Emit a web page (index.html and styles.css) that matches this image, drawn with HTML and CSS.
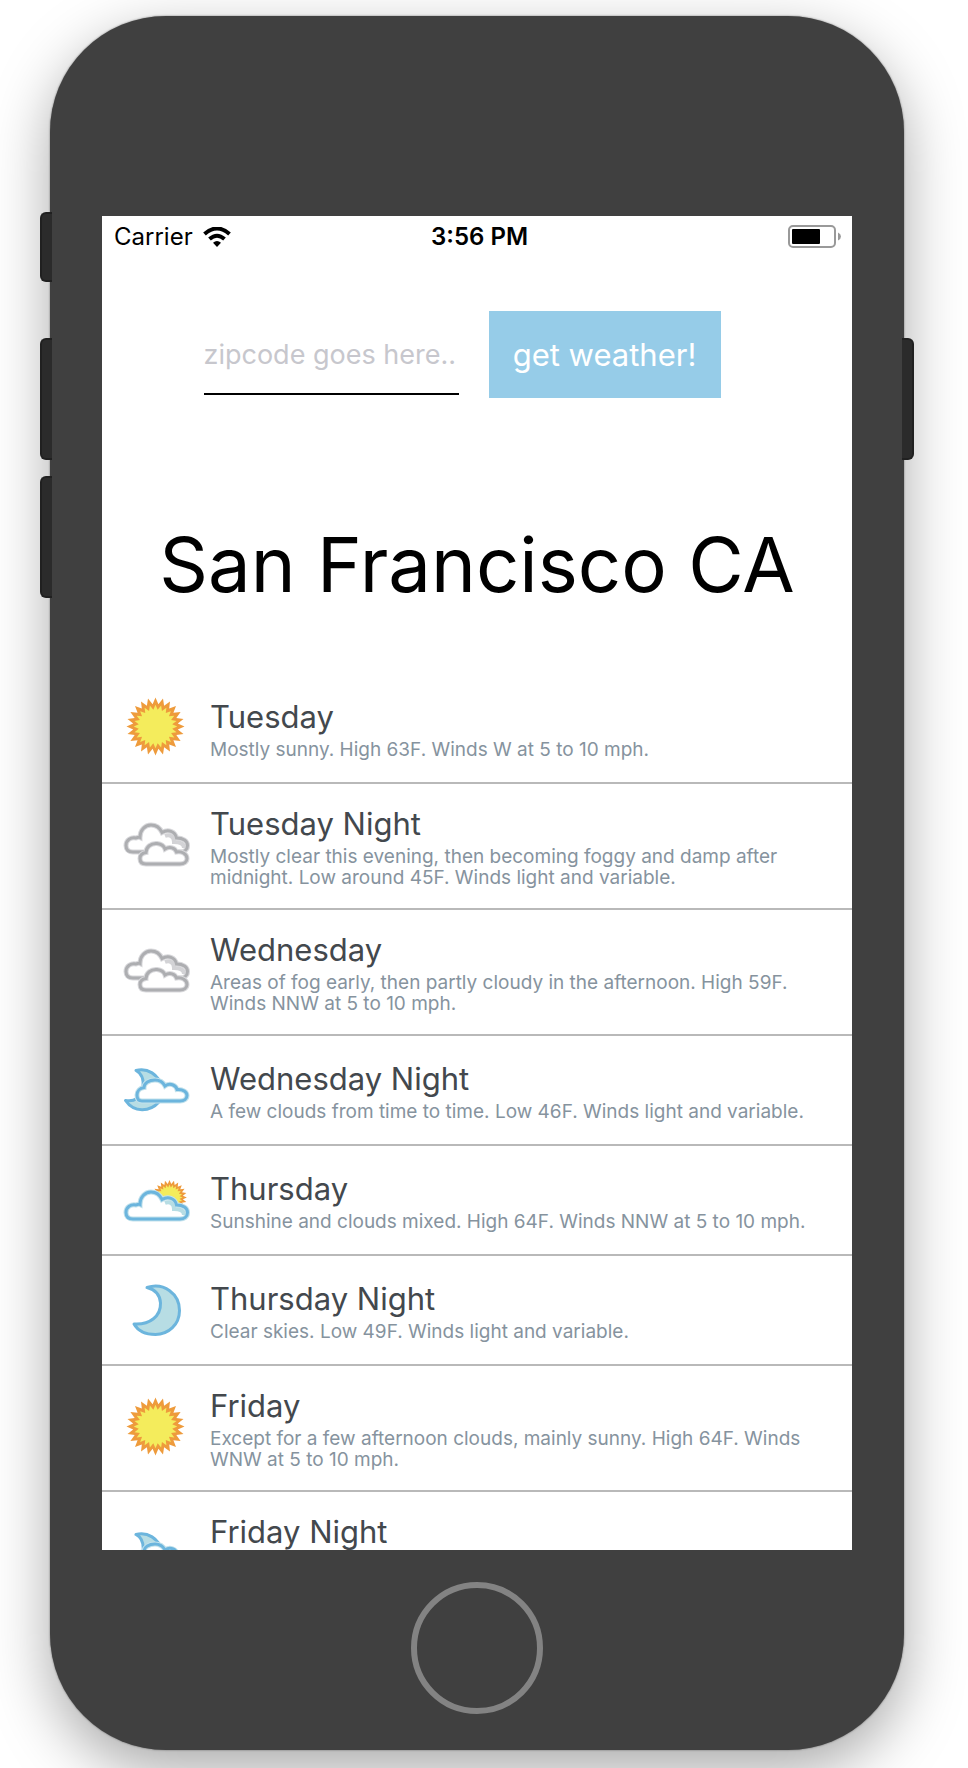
FILE: index.html
```html
<!DOCTYPE html>
<html lang="en">
<head>
<meta charset="utf-8">
<meta name="viewport" content="width=device-width, initial-scale=1">
<title>Weather</title>
<link rel="stylesheet" href="styles.css">
</head>
<body>
<svg class="sprite" aria-hidden="true">
  <defs>
    <path id="rays" d="M29 0L22.3 2.9 28 7.5 20.8 8.6 25.1 14.5 17.9 13.7 20.5 20.5 13.7 17.9 14.5 25.1 8.6 20.8 7.5 28 2.9 22.3 0 29 -2.9 22.3 -7.5 28 -8.6 20.8 -14.5 25.1 -13.7 17.9 -20.5 20.5 -17.9 13.7 -25.1 14.5 -20.8 8.6 -28 7.5 -22.3 2.9 -29 0 -22.3 -2.9 -28 -7.5 -20.8 -8.6 -25.1 -14.5 -17.9 -13.7 -20.5 -20.5 -13.7 -17.9 -14.5 -25.1 -8.6 -20.8 -7.5 -28 -2.9 -22.3 0 -29 2.9 -22.3 7.5 -28 8.6 -20.8 14.5 -25.1 13.7 -17.9 20.5 -20.5 17.9 -13.7 25.1 -14.5 20.8 -8.6 28 -7.5 22.3 -2.9Z"/>
    <g id="sun-disc">
      <use href="#rays" class="sun-rays"/>
      <use href="#rays" class="sun-core" transform="scale(.75)"/>
    </g>
    <path id="cloud-big" d="M11 40C6 40 4 37 4 33.500C4 28 9 25 14 26C15 25.500 17 25 18 25.500C18 18 23 13 29 13C35 13 38 16 40 20.500C46 17 53 19 54.500 26C61 26 65.500 29 65.500 33.500C65.500 38 62 40 58 40Z"/>
    <path id="cloud-low" d="M24 52C20 52 18 50 18 46.500C18 43 20.500 41 24 40.500C24 35 29 31 35 31.500C39 32 42 34 43 37C48 34 53 36 54.500 40C60 39 65 42 65 46.500C65 50 62 52 58 52Z"/>
    <path id="cloud-mid" d="M20 45C16.500 45 15 42.500 15 39C15 35 18 32 22 31.500C22 27 27 24 33 24C38 24 41 26 43 30C48 26.500 54 29 55 33.500C61 33 65 36 65 39.500C65 43 62 45 58 45Z"/>
  </defs>
  <symbol id="sunny" viewBox="0 0 68 68">
    <use href="#sun-disc" transform="translate(33.500 32.500)"/>
  </symbol>
  <symbol id="foggy" viewBox="0 0 68 68">
    <use href="#cloud-big" class="gray-soft"/>
    <path class="gray-shade" d="M43 24C48 22 52 25 52 30C59 30 62 32 62 36"/>
    <use href="#cloud-big" class="gray-line"/>
    <use href="#cloud-low" class="gray-soft"/>
    <use href="#cloud-low" class="gray-line"/>
  </symbol>
  <symbol id="cloudy-night" viewBox="0 0 68 68">
    <path class="moon" d="M14 14.500C25 11.500 37 18 40 32L37 46C28 56 12 57 3.500 44.500C12 46 20 42 21 32C22 23 19 17 14 14.500Z"/>
    <use href="#cloud-mid" class="blue-soft"/>
    <use href="#cloud-mid" class="blue-line"/>
  </symbol>
  <symbol id="partly-cloudy" viewBox="0 0 68 68">
    <use href="#sun-disc" transform="translate(47.500 31.500) scale(.6)"/>
    <g transform="translate(0 13)">
      <use href="#cloud-big" class="blue-soft"/>
      <path class="blue-shade" d="M43 24C48 22 52 25 52 30C59 30 62 32 62 36"/>
      <use href="#cloud-big" class="blue-line"/>
    </g>
  </symbol>
  <symbol id="clear-night" viewBox="0 0 68 68">
    <path class="moon" d="M25 11.500C42 6 57.500 18 57.500 34.500C57.500 49 46 58.500 33.500 58.500C24 58.500 16 55 12 48C28 49 39 40 38.500 27C38 19 33 13.500 25 11.500Z"/>
  </symbol>
</svg>

<div class="phone">
  <span class="side-key side-key--mute"></span>
  <span class="side-key side-key--up"></span>
  <span class="side-key side-key--down"></span>
  <span class="side-key side-key--power"></span>

  <main class="screen">
    <header class="status">
      <div class="status-carrier">
        <span>Carrier</span>
        <svg class="wifi" viewBox="0 0 28 20" aria-label="Wi-Fi">
          <path d="M1.500 7Q14-4 26.500 7M6.500 12Q14 5.500 21.500 12"/>
          <path class="wifi-dot" d="M10 15.800Q14 12.400 18 15.800L14 20Z"/>
        </svg>
      </div>
      <time class="status-time">3:56 PM</time>
      <svg class="battery" viewBox="0 0 53 23" aria-label="Battery">
        <rect class="battery-case" x="1" y="1" width="46" height="21" rx="4"/>
        <rect x="4" y="4" width="28" height="15" rx="1"/>
        <path class="battery-tip" d="M50 7.500Q53 9 53 11.500T50 15.500Z"/>
      </svg>
    </header>

    <form class="search">
      <input class="zip" type="text" placeholder="zipcode goes here.." aria-label="Zipcode">
      <button class="submit" type="button">get weather!</button>
    </form>

    <h1 class="city">San Francisco CA</h1>

    <ul class="forecast">
      <li class="day">
        <svg class="icon"><use href="#sunny"/></svg>
        <div class="info"><h2 class="name">Tuesday</h2><p class="text">Mostly sunny. High 63F. Winds W at 5 to 10 mph.</p></div>
      </li>
      <li class="day">
        <svg class="icon"><use href="#foggy"/></svg>
        <div class="info"><h2 class="name">Tuesday Night</h2><p class="text">Mostly clear this evening, then becoming foggy and damp after midnight. Low around 45F. Winds light and variable.</p></div>
      </li>
      <li class="day">
        <svg class="icon"><use href="#foggy"/></svg>
        <div class="info"><h2 class="name">Wednesday</h2><p class="text">Areas of fog early, then partly cloudy in the afternoon. High 59F. Winds NNW at 5 to 10 mph.</p></div>
      </li>
      <li class="day">
        <svg class="icon"><use href="#cloudy-night"/></svg>
        <div class="info"><h2 class="name">Wednesday Night</h2><p class="text">A few clouds from time to time. Low 46F. Winds light and variable.</p></div>
      </li>
      <li class="day">
        <svg class="icon"><use href="#partly-cloudy"/></svg>
        <div class="info"><h2 class="name">Thursday</h2><p class="text">Sunshine and clouds mixed. High 64F. Winds NNW at 5 to 10 mph.</p></div>
      </li>
      <li class="day">
        <svg class="icon"><use href="#clear-night"/></svg>
        <div class="info"><h2 class="name">Thursday Night</h2><p class="text">Clear skies. Low 49F. Winds light and variable.</p></div>
      </li>
      <li class="day">
        <svg class="icon"><use href="#sunny"/></svg>
        <div class="info"><h2 class="name">Friday</h2><p class="text">Except for a few afternoon clouds, mainly sunny. High 64F. Winds WNW at 5 to 10 mph.</p></div>
      </li>
      <li class="day">
        <svg class="icon"><use href="#cloudy-night"/></svg>
        <div class="info info--tall"><h2 class="name">Friday Night</h2></div>
      </li>
    </ul>
  </main>

  <button class="home" type="button" aria-label="Home"></button>
</div>
</body>
</html>
```

FILE: styles.css
```css
* {
  box-sizing: border-box;
}

body {
  margin: 0;
  overflow: hidden;
  background: #fff;
  color: #000;
  font-family: Inter, Roboto, sans-serif;
}

.sprite {
  position: absolute;
  width: 0;
  height: 0;
}

.phone {
  position: relative;
  display: grid;
  grid-template-rows: minmax(0, 1fr) 200px;
  height: calc(100vh - 34px);
  margin: 16px 64px 18px 50px;
  padding: 200px 52px 0;
  border-radius: 116px;
  background: #404040;
  box-shadow: 0 0 2px rgba(0, 0, 0, .5), 0 20px 60px rgba(0, 0, 0, .34);
}

.side-key {
  position: absolute;
  left: -10px;
  width: 12px;
  height: 122px;
  border: 2px solid #202020;
  border-right: 0;
  border-radius: 6px 0 0 6px;
  background: #2b2b2b;
}

.side-key--mute {
  top: 196px;
  height: 70px;
}

.side-key--up {
  top: 322px;
}

.side-key--down {
  top: 460px;
}

.side-key--power {
  top: 322px;
  right: -10px;
  left: auto;
  border-right: 2px solid #202020;
  border-left: 0;
  border-radius: 0 6px 6px 0;
}

.screen {
  overflow: hidden;
  background: #fff;
}

.status {
  display: grid;
  grid-template-columns: 1fr auto 1fr;
  align-items: center;
  height: 41px;
  padding: 0 11px 0 12px;
  font-size: 24px;
}

.status-carrier {
  display: flex;
  align-items: center;
  gap: 10px;
}

.status-time {
  padding-left: 4px;
  font-weight: 600;
}

.wifi {
  width: 28px;
  height: 20px;
  fill: none;
  stroke: #000;
  stroke-width: 4;
}

.wifi-dot {
  fill: #000;
  stroke: none;
}

.battery {
  justify-self: end;
  width: 53px;
  height: 23px;
}

.battery-case {
  fill: none;
  stroke: #999;
  stroke-width: 2;
}

.battery-tip {
  fill: #999;
}

.search {
  display: flex;
  justify-content: center;
  gap: 30px;
  margin-top: 54px;
  padding-right: 30px;
}

.zip {
  width: 255px;
  height: 84px;
  padding: 4px 0 0;
  border: 0;
  border-bottom: 2px solid #000;
  border-radius: 0;
  background: transparent;
  font: 400 27px/36px Inter, Roboto, sans-serif;
}

.zip::placeholder {
  color: #c7c7cd;
  opacity: 1;
}

.submit {
  width: 232px;
  height: 87px;
  padding: 0;
  border: 0;
  background: #96cce8;
  color: #fff;
  font: 400 31px/36px Inter, Roboto, sans-serif;
}

.city {
  margin: 116px 0 60px;
  font-size: 76px;
  font-weight: 400;
  line-height: 100px;
  text-align: center;
  white-space: nowrap;
}

.forecast {
  margin: 0;
  padding: 0;
  list-style: none;
}

.day {
  display: flex;
  align-items: center;
  gap: 20px;
  min-height: 110px;
  padding: 20px;
  border-bottom: 2px solid #b9b9b9;
}

.icon {
  flex: none;
  width: 68px;
  height: 68px;
}

.info {
  flex: 1;
  min-width: 0;
}

.info--tall {
  min-height: 84px;
}

.name {
  margin: 0 0 2px;
  color: #43484d;
  font-size: 31px;
  font-weight: 400;
  line-height: 40px;
}

.text {
  margin: 0;
  color: #86939e;
  font-size: 19px;
  font-weight: 400;
  line-height: 21px;
}

.sun-rays {
  fill: #ee9b3c;
}

.sun-core {
  fill: #f4ec5c;
}

.gray-soft {
  fill: #fff;
  stroke: #d9d9dc;
  stroke-width: 5;
}

.gray-line {
  fill: none;
  stroke: #adaeb1;
  stroke-width: 3;
}

.gray-shade {
  fill: none;
  stroke: #d3d3d6;
  stroke-width: 4;
}

.moon {
  fill: #b7dde4;
  stroke: #6cb5dd;
  stroke-linejoin: round;
  stroke-width: 3;
}

.blue-soft {
  fill: #fff;
  stroke: #c3e2ec;
  stroke-width: 5;
}

.blue-line {
  fill: none;
  stroke: #6cb5dd;
  stroke-width: 3;
}

.blue-shade {
  fill: none;
  stroke: #b7dde4;
  stroke-width: 4;
}

.home {
  place-self: center;
  width: 132px;
  height: 132px;
  margin-bottom: 4px;
  border: 6px solid #838383;
  border-radius: 50%;
  background: transparent;
}
```
